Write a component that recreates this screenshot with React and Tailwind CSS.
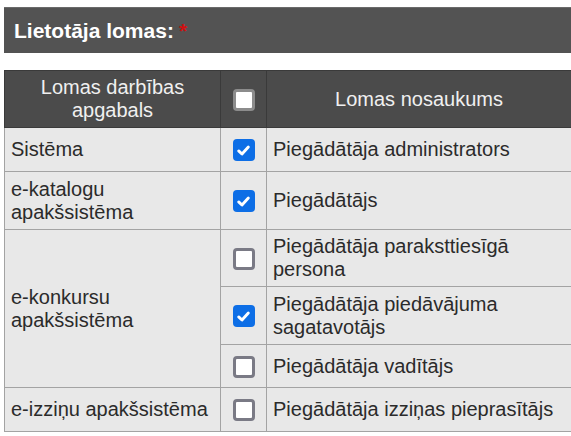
import React from 'react'

const ROWS = [
  { area: 'Sistēma', span: 1, roles: [{ name: 'Piegādātāja administrators', on: true, h: 'h-[44px]' }] },
  { area: 'e-katalogu apakšsistēma', span: 1, roles: [{ name: 'Piegādātājs', on: true, h: 'h-[58px]' }] },
  {
    area: 'e-konkursu apakšsistēma',
    span: 3,
    roles: [
      { name: 'Piegādātāja paraksttiesīgā persona', on: false, h: 'h-[57px]' },
      { name: 'Piegādātāja piedāvājuma sagatavotājs', on: true, h: 'h-[58px]' },
      { name: 'Piegādātāja vadītājs', on: false, h: 'h-[43px]' },
    ],
  },
  { area: 'e-izziņu apakšsistēma', span: 1, roles: [{ name: 'Piegādātāja izziņas pieprasītājs', on: false, h: 'h-[44px]' }] },
]

function Box({ on, header }) {
  if (on) {
    return (
      <span className="inline-flex w-[22px] h-[22px] rounded-[4px] bg-[#0d6ee6] items-center justify-center align-middle">
        <svg width="15" height="15" viewBox="0 0 14 14" fill="none">
          <path d="M2.5 7.4 L5.6 10.3 L11.5 3.8" stroke="white" strokeWidth="2.7" strokeLinecap="round" strokeLinejoin="round" />
        </svg>
      </span>
    )
  }
  return (
    <span
      className={`inline-block w-[22px] h-[22px] rounded-[4px] bg-white border-[3px] align-middle ${
        header ? 'border-[#8c8c8c]' : 'border-[#7a7a85]'
      }`}
    />
  )
}

export default function App() {
  return (
    <div className="w-[571px] h-[436px] bg-white pt-[7px] pl-[4px] overflow-hidden font-['Liberation_Sans',Arial,sans-serif]">
      {/* Title bar */}
      <div className="h-[46px] bg-[#535353] border-t border-[#6a6a6a] flex items-center pl-[10px]">
        <span className="text-[21px] font-bold text-white">Lietotāja lomas:</span>
        <span className="text-[21px] font-bold text-[#d01010] ml-[5px]">*</span>
      </div>

      {/* Roles table */}
      <table className="mt-[17px] w-[567px] border-collapse text-[20px] leading-[23px] text-[#2b2b2b] table-fixed">
        <colgroup>
          <col className="w-[216px]" />
          <col className="w-[46px]" />
          <col className="w-[305px]" />
        </colgroup>
        <thead>
          <tr className="h-[57px] bg-[#4b4b4b] text-[#f0f0f0]">
            <th className="border border-[#3a3a3a] font-normal text-center px-[6px]">Lomas darbības apgabals</th>
            <th className="border border-[#3a3a3a] font-normal text-center">
              <Box on={false} header />
            </th>
            <th className="border border-[#3a3a3a] font-normal text-center">Lomas nosaukums</th>
          </tr>
        </thead>
        <tbody className="bg-[#e8e8e8]">
          {ROWS.map((g) =>
            g.roles.map((r, i) => (
              <tr key={r.name} className={r.h}>
                {i === 0 && (
                  <td rowSpan={g.span} className="border border-[#a3a3a3] px-[6px] align-middle">
                    {g.area}
                  </td>
                )}
                <td className="border border-[#a3a3a3] text-center align-middle">
                  <Box on={r.on} />
                </td>
                <td className="border border-[#a3a3a3] px-[6px] align-middle">{r.name}</td>
              </tr>
            ))
          )}
        </tbody>
      </table>
    </div>
  )
}
